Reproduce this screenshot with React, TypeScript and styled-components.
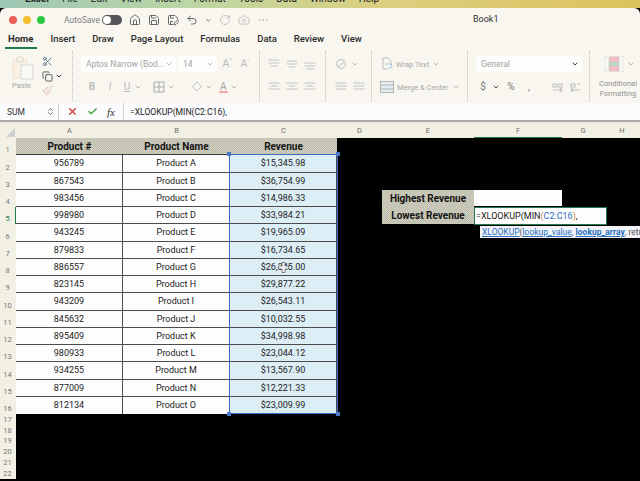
import { ReactNode } from 'react';
import styled, { createGlobalStyle, css } from 'styled-components';
import {
  Camera,
  Check,
  ChevronDown,
  ChevronsUpDown,
  Copy,
  Ellipsis,
  House,
  Paintbrush,
  RotateCw,
  Save,
  Scissors,
  Undo2,
  X,
} from 'lucide-react';

const GlobalStyle = createGlobalStyle`
  html, body {
    margin: 0;
    padding: 0;
    background: #000;
  }
  body {
    font-family: Roboto, "Liberation Sans", sans-serif;
  }
`;

const dither = (a: string, b: string) => css`
  background-color: ${a};
  background-image: conic-gradient(${a} 25%, ${b} 0 50%, ${a} 0 75%, ${b} 0);
  background-size: 2px 2px;
`;

const Page = styled.div`
  position: relative;
  width: 640px;
  height: 481px;
  overflow: hidden;
  display: flex;
  flex-direction: column;
`;

const MenuBar = styled.div`
  height: 8px;
  flex: none;
  display: flex;
  align-items: flex-end;
  gap: 13px;
  padding: 0 0 4px 25px;
  box-sizing: border-box;
  background: linear-gradient(90deg, #9cc6b4 0%, #bcd6a4 30%, #dccf80 60%, #dcc25c 100%);
  font-size: 10px;
  line-height: 10px;
  color: #222;
  white-space: nowrap;
`;

const MenuItem = styled.span<{ $bold?: boolean }>`
  font-weight: ${({ $bold }) => ($bold ? 700 : 400)};
`;

const Chrome = styled.div`
  flex: none;
  border-radius: 6px 6px 0 0;
  ${dither('#f5f4fb', '#fbf9e4')}
`;

const TitleRow = styled.div`
  height: 24px;
  display: flex;
  align-items: center;
  padding-left: 9px;
  position: relative;
`;

const Lights = styled.div`
  display: flex;
  gap: 6px;
  margin-right: 19px;
`;

const Light = styled.span<{ $color: string }>`
  width: 8px;
  height: 8px;
  border-radius: 50%;
  background: ${({ $color }) => $color};
`;

const AutoSave = styled.span`
  font-size: 8.5px;
  color: #808084;
  width: 38px;
`;

const Toggle = styled.span`
  width: 20px;
  height: 10px;
  border-radius: 5px;
  background: #55555a;
  margin-right: 7px;
  display: flex;
  align-items: center;
  padding-left: 1px;
  box-sizing: border-box;
  &::before {
    content: '';
    width: 8px;
    height: 8px;
    border-radius: 50%;
    background: #fff;
  }
`;

const QuickTools = styled.div`
  display: flex;
  align-items: center;
  gap: 7px;
  color: #666;
`;

const Faded = styled.span`
  display: flex;
  opacity: 0.35;
`;

const BookTitle = styled.span`
  position: absolute;
  left: 473px;
  top: 6px;
  font-size: 9px;
  line-height: 11px;
  color: #333;
`;

const Tabs = styled.div`
  height: 17px;
  display: flex;
  align-items: flex-start;
  gap: 17px;
  padding-left: 8px;
  font-size: 9.5px;
  font-weight: 500;
  color: #2b2b2b;
  line-height: 14px;
  white-space: nowrap;
`;

const Tab = styled.span<{ $active?: boolean }>`
  position: relative;
  font-weight: ${({ $active }) => ($active ? 700 : 500)};
  ${({ $active }) =>
    $active &&
    css`
      &::after {
        content: '';
        position: absolute;
        left: -3px;
        right: -4px;
        top: 15px;
        height: 2px;
        background: #1f7a4d;
      }
    `}
`;

const Ribbon = styled.div`
  height: 54px;
  display: flex;
  align-items: stretch;
  padding: 2px 0;
  box-sizing: border-box;
  color: #b5b5b8;
`;

const Group = styled.div<{ $width: number }>`
  width: ${({ $width }) => $width}px;
  flex: none;
  box-sizing: border-box;
  border-right: 1px dotted #bdbdb8;
  display: flex;
`;

const PasteColumn = styled.div`
  width: 42px;
  padding: 5px 0 0 12px;
  box-sizing: border-box;
  display: flex;
  flex-direction: column;
  gap: 1px;
`;

const RibbonLabel = styled.span`
  font-size: 7.5px;
  line-height: 9px;
  color: #a8a8a8;
  white-space: nowrap;
`;

const ClipColumn = styled.div`
  display: flex;
  flex-direction: column;
  align-items: flex-start;
  gap: 1px;
  padding-top: 5px;
`;

const Stack = styled.div<{ $pad: number }>`
  display: flex;
  flex-direction: column;
  gap: 7px;
  padding: 5px 0 0 ${({ $pad }) => $pad}px;
`;

const Row = styled.div<{ $gap?: number; $indent?: number }>`
  display: flex;
  align-items: center;
  gap: ${({ $gap }) => $gap ?? 4}px;
  height: 16px;
  padding-left: ${({ $indent }) => $indent ?? 0}px;
`;

const Select = styled.div<{ $width: number }>`
  width: ${({ $width }) => $width}px;
  height: 16px;
  border-radius: 3px;
  background: #fdfdfb;
  display: flex;
  align-items: center;
  justify-content: space-between;
  padding: 0 3px 0 5px;
  box-sizing: border-box;
  font-size: 8.5px;
  color: #a4a4a4;
  white-space: nowrap;
`;

const Glyph = styled.span<{ $dark?: boolean; $size?: number; $width?: number; $shift?: number }>`
  font-size: ${({ $size }) => $size ?? 10}px;
  color: ${({ $dark }) => ($dark ? '#7a7a7a' : '#bcbcbc')};
  line-height: 12px;
  margin-left: ${({ $shift }) => $shift ?? 0}px;
  ${({ $width }) => $width && `width: ${$width}px; text-align: center;`}
`;

const Sup = styled.sup`
  font-size: 6px;
  line-height: 0;
`;

const FontColor = styled.span`
  font-size: 10px;
  line-height: 9px;
  color: #a4a4a4;
  border-bottom: 2px solid #f5a3a3;
  padding: 0 1px;
`;

const CondLabel = styled.div`
  font-size: 7.5px;
  line-height: 10px;
  color: #8f8f8f;
  text-align: center;
  white-space: nowrap;
`;

const FormulaBar = styled.div`
  height: 17px;
  flex: none;
  background: #fbfbfd;
  display: flex;
  align-items: center;
`;

const NameBox = styled.div`
  width: 59px;
  height: 100%;
  box-sizing: border-box;
  border-right: 1px solid #cfcfcf;
  display: flex;
  align-items: center;
  justify-content: space-between;
  padding: 0 3px 0 7px;
  font-size: 8.5px;
  color: #333;
`;

const FormulaActions = styled.div`
  width: 65px;
  height: 100%;
  box-sizing: border-box;
  display: flex;
  align-items: center;
  gap: 9px;
  padding-left: 8px;
  border-right: 1px solid #d5d5d5;
`;

const Fx = styled.span`
  font-family: "Liberation Serif", serif;
  font-style: italic;
  font-size: 11px;
  color: #333;
`;

const FormulaText = styled.span`
  padding-left: 6px;
  font-size: 8.6px;
  color: #222;
`;

const BarGap = styled.div`
  height: 4px;
  flex: none;
  background: linear-gradient(#a9a9a9 0 2px, #ebebe4 2px);
`;

const Sheet = styled.div`
  position: relative;
  flex: 1;
  display: grid;
  grid-template-columns: 16px 107px 107px 107px 45px 92px 88px 42px 36px;
  grid-template-rows: 14px repeat(16, 17.25px) repeat(6, 10.8px);
  background: #000;
`;

const Corner = styled.div`
  ${dither('#f4f3ee', '#f0eedb')}
  position: relative;
  &::after {
    content: '';
    position: absolute;
    right: 1px;
    bottom: 1px;
    border-style: solid;
    border-width: 0 0 9px 9px;
    border-color: transparent transparent #cfcfcf transparent;
  }
`;

const ColumnHead = styled.div<{ $active?: boolean }>`
  ${dither('#f4f3ee', '#f0eedb')}
  font-size: 7.5px;
  color: #6c6c6c;
  display: flex;
  align-items: center;
  justify-content: center;
  box-sizing: border-box;
  border-bottom: 1px solid ${({ $active }) => ($active ? '#1f7a4d' : 'transparent')};
`;

const RowNumber = styled.div<{ $active?: boolean }>`
  grid-column: 1;
  ${dither('#f4f3ee', '#f0eedb')}
  font-size: 7.5px;
  line-height: 9px;
  color: ${({ $active }) => ($active ? '#1f7a4d' : '#777')};
  display: flex;
  align-items: flex-end;
  justify-content: center;
  box-sizing: border-box;
  border-right: 1px solid ${({ $active }) => ($active ? '#1f7a4d' : 'transparent')};
  padding-bottom: 1px;
`;

const Cell = styled.div<{ $last?: boolean; $tint?: boolean }>`
  box-sizing: border-box;
  display: flex;
  align-items: center;
  justify-content: center;
  font-size: 9px;
  color: #222;
  border-right: 1px solid #4c4c4c;
  border-bottom: ${({ $last }) => ($last ? 'none' : '1px solid #4c4c4c')};
  ${({ $tint }) => ($tint ? dither('#d3e9f6', '#e6f3f4') : 'background: #fdfdfd;')}
`;

const HeadCell = styled.div`
  ${dither('#bcbcb0', '#cfcfbb')}
  box-sizing: border-box;
  display: flex;
  align-items: center;
  justify-content: center;
  font-size: 10px;
  font-weight: 700;
  color: #141414;
  border-bottom: 1px solid #3a3a3a;
`;

const SideLabel = styled.div`
  grid-column: 6;
  ${dither('#bcbcb0', '#cfcfbb')}
  display: flex;
  align-items: center;
  justify-content: center;
  font-size: 10px;
  font-weight: 700;
  color: #141414;
`;

const BlankCell = styled.div`
  grid-column: 7;
  background: #fdfdfd;
  margin-bottom: 1px;
`;

const EditAnchor = styled.div`
  grid-column: 7;
  grid-row: 6;
  position: relative;
`;

const EditBox = styled.div`
  position: absolute;
  left: 0;
  top: 0;
  width: 133px;
  height: 18px;
  box-sizing: border-box;
  background: #fdfdfd;
  border: 1px solid #1f7a4d;
  display: flex;
  align-items: center;
  padding-left: 1px;
  font-size: 9px;
  color: #1a1a1a;
  white-space: nowrap;
`;

const Ref = styled.span<{ $color: string }>`
  color: ${({ $color }) => $color};
`;

const Hint = styled.div`
  position: absolute;
  left: 6px;
  top: 19px;
  width: 160px;
  height: 12px;
  background: #f1f3f9;
  box-sizing: border-box;
  padding-left: 2px;
  display: flex;
  align-items: center;
  font-size: 8.5px;
  color: #555;
  white-space: pre;
  overflow: hidden;
`;

const HintLink = styled.span<{ $strong?: boolean }>`
  color: #2a6fbe;
  text-decoration: underline;
  font-weight: ${({ $strong }) => ($strong ? 700 : 400)};
`;

// absolute inside its grid area: C2:C16
const Selection = styled.div`
  grid-column: 4 / 5;
  grid-row: 3 / 18;
  position: absolute;
  inset: -1px -1px 0 -1px;
  box-sizing: border-box;
  border: 1px solid #3f66c4;
  pointer-events: none;
`;

const Handle = styled.span<{ $x: 'left' | 'right'; $y: 'top' | 'bottom' }>`
  position: absolute;
  width: 4px;
  height: 4px;
  background: #4a78c8;
  ${({ $x }) => $x}: -3px;
  ${({ $y }) => $y}: -3px;
`;

const Cursor = styled.div`
  position: absolute;
  left: 278px;
  top: 262px;
  display: flex;
`;

const menuItems = ['File', 'Edit', 'View', 'Insert', 'Format', 'Tools', 'Data', 'Window', 'Help'];
const tabs = ['Insert', 'Draw', 'Page Layout', 'Formulas', 'Data', 'Review', 'View'];
const columns = ['A', 'B', 'C', 'D', 'E', 'F', 'G', 'H'];

const products: [string, string, string][] = [
  ['956789', 'Product A', '$15,345.98'],
  ['867543', 'Product B', '$36,754.99'],
  ['983456', 'Product C', '$14,986.33'],
  ['998980', 'Product D', '$33,984.21'],
  ['943245', 'Product E', '$19,965.09'],
  ['879833', 'Product F', '$16,734.65'],
  ['886557', 'Product G', '$26,345.00'],
  ['823145', 'Product H', '$29,877.22'],
  ['943209', 'Product I', '$26,543.11'],
  ['845632', 'Product J', '$10,032.55'],
  ['895409', 'Product K', '$34,998.98'],
  ['980933', 'Product L', '$23,044.12'],
  ['934255', 'Product M', '$13,567.90'],
  ['877009', 'Product N', '$12,221.33'],
  ['812134', 'Product O', '$23,009.99'],
];

const AlignIcon = ({ lines }: { lines: [number, number][] }) => (
  <svg width="12" height="12" viewBox="0 0 12 12" stroke="#c2c2c2" strokeWidth="1" fill="none">
    {lines.map(([y, w], i) => (
      <path key={i} d={`M${(12 - w) / 2} ${y}h${w}`} />
    ))}
  </svg>
);

const Chevron = ({ dark }: { dark?: boolean }) => (
  <ChevronDown size={8} strokeWidth={dark ? 3 : 2} color={dark ? '#444' : '#999'} />
);

const SaveAsIcon = () => (
  <svg width="12" height="12" viewBox="0 0 24 24" fill="none" stroke="currentColor" strokeWidth="2">
    <path d="M12 21H5a2 2 0 0 1-2-2V5a2 2 0 0 1 2-2h11l5 5v3" />
    <path d="M7 3v5h7M7 21v-6h5" />
    <path d="M14 22l1-4 6-6 3 3-6 6z" />
  </svg>
);

const PasteIcon = () => (
  <svg width="22" height="24" viewBox="0 0 22 24" fill="none" strokeWidth="1">
    <rect x="1" y="4" width="14" height="18" rx="1" fill="#fbf0e4" stroke="#f0dfcb" />
    <rect x="5" y="1" width="6" height="5" rx="1" fill="#f5f3ea" stroke="#ddd8ca" />
    <rect x="9" y="9" width="12" height="14" fill="#f9f8f4" stroke="#d5d5d5" />
  </svg>
);

const BordersIcon = () => (
  <svg width="12" height="12" viewBox="0 0 12 12" fill="none" stroke="#adadad">
    <path d="M1 1h10v10H1zM6 1v10M1 6h10" />
  </svg>
);

const FillIcon = () => (
  <svg width="12" height="12" viewBox="0 0 12 12" fill="none" stroke="#c0c0c0">
    <path d="M6 1l4.5 4.5L6 10 1.5 5.5z" />
  </svg>
);

const OrientIcon = () => (
  <svg width="13" height="13" viewBox="0 0 13 13" fill="none" stroke="#bcbcbc">
    <circle cx="6" cy="6" r="4.5" />
    <path d="M3 9l7-6" />
  </svg>
);

const WrapIcon = () => (
  <svg width="13" height="15" viewBox="0 0 13 15" fill="none" stroke="#bcbcbc">
    <path d="M3 1h5l3 3v4M3 1v11h4" />
    <path d="M5 7h5a2 2 0 0 1 0 4H8" stroke="#a5c8e0" />
  </svg>
);

const MergeIcon = () => (
  <svg width="14" height="12" viewBox="0 0 14 12" fill="#e2eef2" stroke="#b5b5b5">
    <rect x="0.5" y="0.5" width="13" height="11" />
    <path d="M0.5 4h13M0.5 8h13" fill="none" />
  </svg>
);

const DecimalIcon = ({ flip }: { flip?: boolean }) => (
  <svg width="13" height="13" viewBox="0 0 13 13" fill="none" stroke="#c2c2c2" strokeWidth="1.2">
    <path d={flip ? 'M2 3h4v3H2zM8 3h3M2 9h9M4 7l-2 2 2 2' : 'M2 3h3v3H2zM7 3h4v3H7zM2 9h9M9 7l2 2-2 2'} />
  </svg>
);

const CondIcon = () => (
  <svg width="20" height="16" viewBox="0 0 20 16" stroke="#c4c4c4" strokeWidth="0.5">
    <rect x="0" y="0" width="20" height="16" fill="#f7f6f0" />
    <rect x="5" y="1" width="10" height="5" fill="#f5bcc4" />
    <rect x="5" y="6" width="10" height="4" fill="#b9dcc8" />
    <rect x="5" y="10" width="10" height="5" fill="#f5bcc4" />
  </svg>
);

const CrossCursor = () => (
  <svg width="11" height="11" viewBox="0 0 11 11" fill="#f2f2f2" stroke="#666" strokeWidth="0.8">
    <path d="M4 0.5h3v3.5h3.5v3H7v3.5H4V7H0.5V4H4z" />
  </svg>
);

const IconCell = ({ children }: { children: ReactNode }) => <Row $gap={2}>{children}</Row>;

const App = () => {
  return (
    <Page>
      <GlobalStyle />
      <MenuBar>
        <MenuItem $bold>Excel</MenuItem>
        {menuItems.map((item) => (
          <MenuItem key={item}>{item}</MenuItem>
        ))}
      </MenuBar>
      <Chrome>
        <TitleRow>
          <Lights>
            <Light $color="#ee5f57" />
            <Light $color="#f5bd2e" />
            <Light $color="#2dc841" />
          </Lights>
          <AutoSave>AutoSave</AutoSave>
          <Toggle />
          <QuickTools>
            <House size={12} />
            <Save size={12} />
            <SaveAsIcon />
            <Undo2 size={12} />
            <ChevronDown size={7} strokeWidth={3} />
            <Faded>
              <RotateCw size={12} />
            </Faded>
            <Faded>
              <Camera size={12} />
            </Faded>
            <Faded>
              <Ellipsis size={12} />
            </Faded>
          </QuickTools>
          <BookTitle>Book1</BookTitle>
        </TitleRow>
        <Tabs>
          <Tab $active>Home</Tab>
          {tabs.map((tab) => (
            <Tab key={tab}>{tab}</Tab>
          ))}
        </Tabs>
        <Ribbon>
          <Group $width={73}>
            <PasteColumn>
              <PasteIcon />
              <RibbonLabel>Paste</RibbonLabel>
            </PasteColumn>
            <ClipColumn>
              <Scissors size={11} color="#55708a" />
              <IconCell>
                <Copy size={11} color="#555" />
                <Chevron dark />
              </IconCell>
              <Paintbrush size={11} color="#e0c4c4" />
            </ClipColumn>
          </Group>
          <Group $width={187}>
            <Stack $pad={8}>
              <Row $gap={2}>
                <Select $width={95}>
                  Aptos Narrow (Bod...
                  <Chevron />
                </Select>
                <Select $width={39}>
                  14
                  <Chevron />
                </Select>
                <Glyph $size={11} $width={16}>
                  A<Sup>^</Sup>
                </Glyph>
                <Glyph $size={10} $width={16}>
                  A<Sup>ˇ</Sup>
                </Glyph>
              </Row>
              <Row $gap={0} $indent={4}>
                <Glyph $width={14}>
                  <b>B</b>
                </Glyph>
                <Glyph $width={14} $shift={4}>
                  <i>I</i>
                </Glyph>
                <Row $gap={2} $indent={5}>
                  <Glyph $width={10}>
                    <u>U</u>
                  </Glyph>
                  <Chevron />
                </Row>
                <Row $gap={2} $indent={11}>
                  <BordersIcon />
                  <Chevron />
                </Row>
                <Row $gap={2} $indent={16}>
                  <FillIcon />
                  <Chevron />
                </Row>
                <Row $gap={2} $indent={6}>
                  <FontColor>A</FontColor>
                  <Chevron />
                </Row>
              </Row>
            </Stack>
          </Group>
          <Group $width={66}>
            <Stack $pad={8}>
              <Row $gap={6}>
                <AlignIcon lines={[[2, 11], [5, 11], [8, 7]]} />
                <AlignIcon lines={[[3, 11], [6, 11], [9, 7]]} />
                <AlignIcon lines={[[5, 11], [8, 11], [11, 7]]} />
              </Row>
              <Row $gap={6}>
                <AlignIcon lines={[[2, 11], [5, 7], [8, 11]]} />
                <AlignIcon lines={[[2, 11], [5, 7], [8, 11]]} />
                <AlignIcon lines={[[2, 11], [5, 7], [8, 11]]} />
              </Row>
            </Stack>
          </Group>
          <Group $width={46}>
            <Stack $pad={9}>
              <Row $gap={3}>
                <OrientIcon />
                <Chevron />
              </Row>
              <Row $gap={6}>
                <AlignIcon lines={[[2, 11], [5, 11], [8, 11]]} />
                <AlignIcon lines={[[2, 11], [5, 11], [8, 11]]} />
              </Row>
            </Stack>
          </Group>
          <Group $width={96}>
            <Stack $pad={8}>
              <Row $gap={3}>
                <WrapIcon />
                <RibbonLabel>Wrap Text</RibbonLabel>
                <Chevron />
              </Row>
              <Row $gap={3}>
                <MergeIcon />
                <RibbonLabel>Merge &amp; Center</RibbonLabel>
                <Chevron />
              </Row>
            </Stack>
          </Group>
          <Group $width={122}>
            <Stack $pad={8}>
              <Select $width={106}>
                General
                <Chevron dark />
              </Select>
              <Row $gap={0} $indent={3}>
                <Glyph $dark $width={8}>
                  $
                </Glyph>
                <Row $indent={5}>
                  <Chevron dark />
                </Row>
                <Glyph $dark $width={12} $shift={5}>
                  %
                </Glyph>
                <Glyph $dark $width={10} $shift={7}>
                  ,
                </Glyph>
                <Row $indent={17}>
                  <DecimalIcon />
                </Row>
                <Row $indent={5}>
                  <DecimalIcon flip />
                </Row>
              </Row>
            </Stack>
          </Group>
          <Stack $pad={9}>
            <Row $gap={3} $indent={5}>
              <CondIcon />
              <Chevron />
            </Row>
            <CondLabel>
              Conditional
              <br />
              Formatting
            </CondLabel>
          </Stack>
        </Ribbon>
      </Chrome>
      <FormulaBar>
        <NameBox>
          SUM
          <ChevronsUpDown size={9} color="#444" />
        </NameBox>
        <FormulaActions>
          <X size={11} strokeWidth={3} color="#d2453d" />
          <Check size={11} strokeWidth={3} color="#4fa64f" />
          <Fx>fx</Fx>
        </FormulaActions>
        <FormulaText>=XLOOKUP(MIN(C2:C16),</FormulaText>
      </FormulaBar>
      <BarGap />
      <Sheet>
        <Corner />
        {columns.map((col) => (
          <ColumnHead key={col} $active={col === 'F'}>
            {col}
          </ColumnHead>
        ))}

        <RowNumber>1</RowNumber>
        <HeadCell>Product #</HeadCell>
        <HeadCell>Product Name</HeadCell>
        <HeadCell>Revenue</HeadCell>

        {products.map(([id, name, revenue], i) => {
          const rowNo = i + 2;
          const last = rowNo === 16;
          return [
            <RowNumber key={`n${rowNo}`} $active={rowNo === 5}>
              {rowNo}
            </RowNumber>,
            <Cell key={`a${rowNo}`} $last={last}>
              {id}
            </Cell>,
            <Cell key={`b${rowNo}`} $last={last}>
              {name}
            </Cell>,
            <Cell key={`c${rowNo}`} $last={last} $tint>
              {revenue}
            </Cell>,
            rowNo === 4 ? <SideLabel key="high">Highest Revenue</SideLabel> : null,
            rowNo === 4 ? <BlankCell key="blank" /> : null,
            rowNo === 5 ? <SideLabel key="low">Lowest Revenue</SideLabel> : null,
          ];
        })}

        {[17, 18, 19, 20, 21, 22].map((n) => (
          <RowNumber key={n}>{n}</RowNumber>
        ))}

        <Selection>
          <Handle $x="left" $y="top" />
          <Handle $x="right" $y="top" />
          <Handle $x="left" $y="bottom" />
          <Handle $x="right" $y="bottom" />
        </Selection>

        <EditAnchor>
          <EditBox>
            =XLOOKUP(MIN<Ref $color="#d8823a">(</Ref>
            <Ref $color="#2f6fc0">C2:C16</Ref>
            <Ref $color="#d8823a">)</Ref>,
          </EditBox>
          <Hint>
            <HintLink>XLOOKUP</HintLink>(<HintLink>lookup_value</HintLink>, <HintLink $strong>lookup_array</HintLink>, return_array
          </Hint>
        </EditAnchor>
      </Sheet>
      <Cursor>
        <CrossCursor />
      </Cursor>
    </Page>
  );
};

export default App;
